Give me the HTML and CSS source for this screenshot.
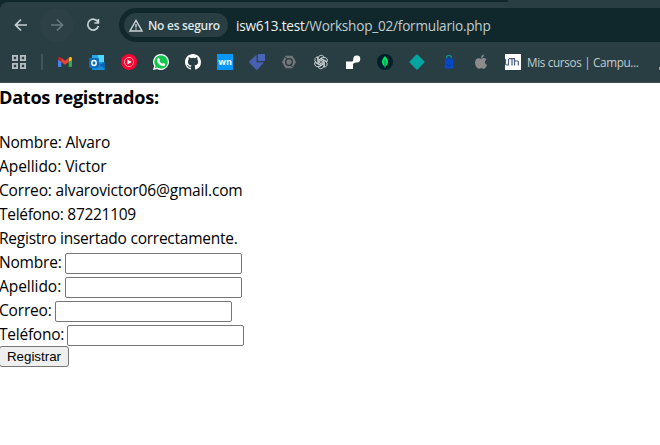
FILE: index.html
```html
<!DOCTYPE html>
<html lang="es">
<head>
<meta charset="utf-8">
<title>Formulario</title>
<link rel="stylesheet" href="styles.css">
</head>
<body>
<header class="browser">
  <div class="tabs"><div class="tab-edge"></div></div>
  <div class="toolbar">
    <nav class="nav">
      <span class="nav-btn"><svg width="16" height="16" viewBox="0 0 16 16"><path d="M14 8H3M8 2.5L2.5 8L8 13.5" class="line"/></svg></span>
      <span class="nav-btn disabled"><svg width="16" height="16" viewBox="0 0 16 16"><path d="M2 8H13M8 2.5L13.5 8L8 13.5" class="line"/></svg></span>
      <span class="nav-btn"><svg width="16" height="16" viewBox="0 0 16 16"><path d="M13 5.2A5.4 5.4 0 1 0 13.4 9M13.4 2V6H9.4" class="line"/></svg></span>
    </nav>
    <div class="address">
      <div class="chip">
        <svg width="14" height="13" viewBox="0 0 14 13"><path d="M7 1.4L13 12H1Z" fill="none" stroke="#c9d2d4" stroke-width="1.4"/><path d="M7 5V8.6M7 9.4V10.8" stroke="#c9d2d4" stroke-width="1.4"/></svg>
        <span class="chip-text">No es seguro</span>
      </div>
      <span class="url"><span class="host">isw613.test</span>/Workshop_02/formulario.php</span>
    </div>
  </div>
  <div class="bookmarks">
    <svg class="apps" width="14" height="14" viewBox="0 0 14 14"><path d="M.9.9h4.2v4.2H.9zM8.9.9h4.2v4.2H8.9zM.9 8.9h4.2v4.2H.9zM8.9 8.9h4.2v4.2H8.9z" fill="none" stroke="#b5bfc0" stroke-width="1.8"/></svg>
    <span class="sep"></span>
    <div class="icons">
      <svg width="16" height="16" viewBox="0 0 16 16"><path d="M1 4V12.2Q1 13 2 13H4.3V6.5Z" fill="#4285f4"/><path d="M15 4V12.2Q15 13 14 13H11.7V6.5Z" fill="#34a853"/><path d="M1 4.5Q1 2.5 3 3L4.3 4V8L1 5.7Z" fill="#c5221f"/><path d="M15 4.5Q15 2.5 13 3L11.7 4V8L15 5.7Z" fill="#fbbc04"/><path d="M4.3 4L8 6.8L11.7 4V8L8 10.8L4.3 8Z" fill="#ea4335"/></svg>
      <svg width="16" height="16" viewBox="0 0 16 16"><path d="M3 1H15V13H3Z" fill="#28a8ea"/><path d="M9 1H15V8H9Z" fill="#50d9ff"/><path d="M3 5H9V9H3Z" fill="#0364b8"/><path d="M3 9L16 8V15Q16 16 15 16H4Q3 16 3 15Z" fill="#1490df"/><path d="M10 11L16 8V15Z" fill="#0a64ad"/><rect y="4" width="10" height="10" rx="1" fill="#0f6cbd"/><ellipse cx="5" cy="9" rx="2.2" ry="2.5" fill="none" stroke="#fff" stroke-width="1.4"/></svg>
      <svg width="16" height="16" viewBox="0 0 16 16"><circle cx="8" cy="8" r="8" fill="#ff0033"/><circle cx="8" cy="8" r="4.6" fill="none" stroke="#ffb3c0" stroke-width=".9"/><path d="M6.4 5.4L10.8 8L6.4 10.6Z" fill="#fff"/></svg>
      <svg width="16" height="16" viewBox="0 0 16 16"><path d="M8 0A8 8 0 1 1 4.1 15L0 16L1.1 12A8 8 0 0 1 8 0Z" fill="#fff"/><path d="M8 1.3A6.7 6.7 0 1 1 4.4 13.6L1.9 14.2L2.5 11.8A6.7 6.7 0 0 1 8 1.3Z" fill="#12c64a"/><path d="M5.1 4.1Q5.8 3.6 6.2 4.2L7 6Q7 6.5 6.3 7.1Q7.2 8.9 9.2 9.8L10.1 8.8L12.3 9.9Q12.3 12.2 10 12.1Q5.2 11.2 4.1 6.8Q3.8 5.2 5.1 4.1Z" fill="#fff"/></svg>
      <svg width="16" height="16" viewBox="0 0 16 16"><path fill="#fff" d="M8 0C3.58 0 0 3.58 0 8c0 3.54 2.29 6.53 5.47 7.59.4.07.55-.17.55-.38 0-.19-.01-.82-.01-1.49-2.01.37-2.53-.49-2.69-.94-.09-.23-.48-.94-.82-1.13-.28-.15-.68-.52-.01-.53.63-.01 1.08.58 1.23.82.72 1.21 1.87.87 2.33.66.07-.52.28-.87.51-1.07-1.78-.2-3.64-.89-3.64-3.95 0-.87.31-1.59.82-2.15-.08-.2-.36-1.02.08-2.12 0 0 .67-.21 2.2.82a7.6 7.6 0 0 1 4 0c1.53-1.04 2.2-.82 2.2-.82.44 1.1.16 1.92.08 2.12.51.56.82 1.27.82 2.15 0 3.07-1.87 3.75-3.65 3.95.29.25.54.73.54 1.48 0 1.07-.01 1.93-.01 2.2 0 .21.15.46.55.38A8 8 0 0 0 16 8c0-4.42-3.58-8-8-8Z"/></svg>
      <span class="wn">wn</span>
      <svg width="16" height="16" viewBox="0 0 16 16"><path d="M8.8 0H16V7H8.8Z" fill="#4a64b5"/><path d="M7.6 .8V8.2H15L9 15.3Q8 16.3 7 15.4L.6 9Q-.4 8 .6 7Z" fill="#4860b2"/></svg>
      <svg width="16" height="16" viewBox="0 0 16 16"><path d="M4.5 1.8H11.5L15 8L11.5 14.2H4.5L1 8Z" fill="#737679"/><circle cx="8" cy="8" r="3.3" fill="none" stroke="#263b40" stroke-width="1.3"/><path d="M4 3L7 5M12 13L9 11" stroke="#263b40"/></svg>
      <svg width="16" height="16" viewBox="0 0 16 16" fill="none" stroke="#d4dcdc" stroke-width=".85"><g id="petal"><path d="M5.2 9.7V4.3Q5.4 1.3 8.2 1.2Q9.8 1.2 10.8 2.5L6.7 5V8.8"/></g><use href="#petal" transform="rotate(60 8 8)"/><use href="#petal" transform="rotate(120 8 8)"/><use href="#petal" transform="rotate(180 8 8)"/><use href="#petal" transform="rotate(240 8 8)"/><use href="#petal" transform="rotate(300 8 8)"/></svg>
      <svg width="16" height="16" viewBox="0 0 16 16"><path d="M1 7.5H7Q8.3 7.2 8.3 5.8V4.6A3.5 3.5 0 1 1 11.5 8.4Q8 8.6 8 10.5V15H1Z" fill="#fff"/></svg>
      <svg width="16" height="16" viewBox="0 0 16 16"><circle cx="8" cy="8" r="8" fill="#001e2b"/><path d="M8 2C12 6 12 10 8 13C4 10 4 6 8 2Z" fill="#00df64"/><path d="M8 6V14" stroke="#008c46"/></svg>
      <svg width="16" height="16" viewBox="0 0 16 16"><path d="M7.2.8Q8 0 8.8.8L15.2 7.2Q16 8 15.2 8.8L8.8 15.2Q8 16 7.2 15.2L.8 8.8Q0 8 .8 7.2Z" fill="#05a6a0"/></svg>
      <svg width="16" height="16" viewBox="0 0 16 16"><path d="M5.7 4V3Q5.7 1.5 8 1.5Q10.3 1.5 10.3 3V4" fill="none" stroke="#079eae" stroke-width="1.2"/><path d="M4.2 4.5H11.8L12.5 14.5H3.5Z" fill="#0648c5"/><path d="M5.5 6.5H6.5M9.5 6.5H10.5M5.5 10Q8 14 10.5 10" fill="none" stroke="#0538a8"/></svg>
      <svg width="16" height="16" viewBox="0 0 16 16"><path d="M8 4C8 2 9.2.8 10.8.5C11 2.5 9.8 3.8 8 4ZM8 4.8C9 4.8 9.5 4 11 4.1Q12.7 4.2 13.6 5.6C11 7.2 11.6 10 14 11C13.2 13 12 14.8 10.8 14.8C9.7 14.8 9.4 14.2 8.2 14.2S6.8 14.8 5.8 14.8C4 14.8 2 11.4 2 8.6C2 5.7 3.8 4.2 5.6 4.2C6.7 4.2 7.3 4.8 8 4.8Z" fill="#8b8b8b"/></svg>
      <svg width="16" height="16" viewBox="0 0 16 16"><path d="M0 0H16V16H0Z" fill="#fff"/><path d="M.5 5V9.5Q.5 11 2 11H3.5V5M4 4.7H10M7 5V11.5M9.5 11.5V7H12.5Q13.3 7 13.3 8V11.5M9.5 7V4.7" fill="none" stroke="#455a86" stroke-width="1.2"/></svg>
    </div>
    <span class="bm-text">Mis cursos | Campu...</span>
    <span class="next"></span>
  </div>
</header>
<main class="page">
  <h3 class="title">Datos registrados:</h3>
  <div class="line-row name-value">Nombre: Alvaro</div>
  <div class="line-row surname-value">Apellido: Victor</div>
  <div class="line-row mail-value">Correo: alvarovictor06@gmail.com</div>
  <div class="line-row phone-value">Teléfono: 87221109</div>
  <div class="line-row message">Registro insertado correctamente.</div>
  <form>
    <div class="field"><label class="l-name" for="n">Nombre:</label><input id="n" type="text"></div>
    <div class="field"><label class="l-surname" for="a">Apellido:</label><input id="a" type="text"></div>
    <div class="field"><label class="l-mail" for="c">Correo:</label><input id="c" type="text"></div>
    <div class="field"><label class="l-phone" for="t">Teléfono:</label><input id="t" type="text"></div>
    <button class="submit" type="button">Registrar</button>
  </form>
</main>
</body>
</html>
```
FILE: styles.css
```css
* { box-sizing: border-box; }
body { margin: 0; width: 660px; height: 445px; overflow: hidden; background: #fff; color: #000; font-family: "Open Sans", "Noto Sans", sans-serif; }
svg { display: block; flex: none; }
.browser { height: 83px; background: #10282c; border-bottom: 1px solid #454a50; }
.tabs { height: 2px; display: flex; background: #10282c; }
.tab-edge { margin-left: 508px; flex: 1; background: #283e43; }
.toolbar { height: 46px; display: flex; padding-top: 6px; background: #283e43; border-top-left-radius: 8px; }
.nav { width: 119px; display: flex; gap: 2px; padding-left: 4px; }
.nav-btn { width: 34px; height: 34px; display: flex; align-items: center; justify-content: center; border-radius: 50%; color: #c3cfd1; }
.disabled { background: #2c4045; color: #68797d; }
.line { fill: none; stroke: currentColor; stroke-width: 1.7; }
.address { flex: 1; height: 34px; background: #10282c; border-radius: 17px 0 0 17px; display: flex; align-items: center; padding-left: 5px; }
.chip { width: 104px; height: 24px; border-radius: 12px; background: #283e43; display: flex; align-items: center; gap: 5px; padding-left: 5px; }
.chip-text { font-size: 12px; font-weight: 600; color: #dfe7e8; white-space: nowrap; letter-spacing: -.28px; }
.url { margin-left: 8px; font-size: 13.6px; color: #c2cccd; white-space: nowrap; letter-spacing: -.23px; }
.host { color: #edf2f2; }
.bookmarks { height: 34px; display: flex; align-items: center; padding: 0 0 6px 12px; background: #283e43; }
.sep { width: 2px; height: 16px; margin: 0 14px 0 15px; background: #3d565b; }
.icons { display: flex; gap: 16px; }
.wn { width: 16px; height: 16px; background: #0797ff; color: #fff; font: bold 9px/15px "Open Sans", sans-serif; text-align: center; }
.bm-text { margin-left: 6px; font-size: 11.7px; color: #c3cdcf; white-space: nowrap; width: 112px; letter-spacing: -.33px; }
.next { width: 1px; height: 3px; margin: 12px 0 0 auto; background: #99a3a5; }
.page { margin-left: -1px; }
.title { margin: 1px 0 20px; font-size: 18.2px; line-height: 26px; letter-spacing: -.31px; }
.line-row, .field { height: 24px; line-height: 24px; font-size: 15.5px; white-space: nowrap; }
.name-value { letter-spacing: -.19px; }
.surname-value { letter-spacing: -.05px; }
.mail-value { letter-spacing: -.16px; }
.phone-value { letter-spacing: -.3px; }
.message { letter-spacing: -.24px; }
form { padding-top: 1px; }
.field { display: flex; align-items: center; }
.field label { line-height: 22px; height: 24px; }
.l-name { width: 66px; letter-spacing: -.19px; }
.l-surname { width: 66px; letter-spacing: -.05px; }
.l-mail { width: 56px; letter-spacing: -.18px; }
.l-phone { width: 68px; letter-spacing: -.24px; }
.field input { width: 177px; height: 21px; margin: 0; border: 1px solid #767676; border-radius: 2px; background: #fff; }
.submit { display: block; width: 70px; height: 21px; margin: -1px 0 0; padding: 0; border: 1px solid #767676; border-radius: 3px; background: #efefef; color: #000; font: 13.333px "Liberation Sans", Arial, sans-serif; }
```
